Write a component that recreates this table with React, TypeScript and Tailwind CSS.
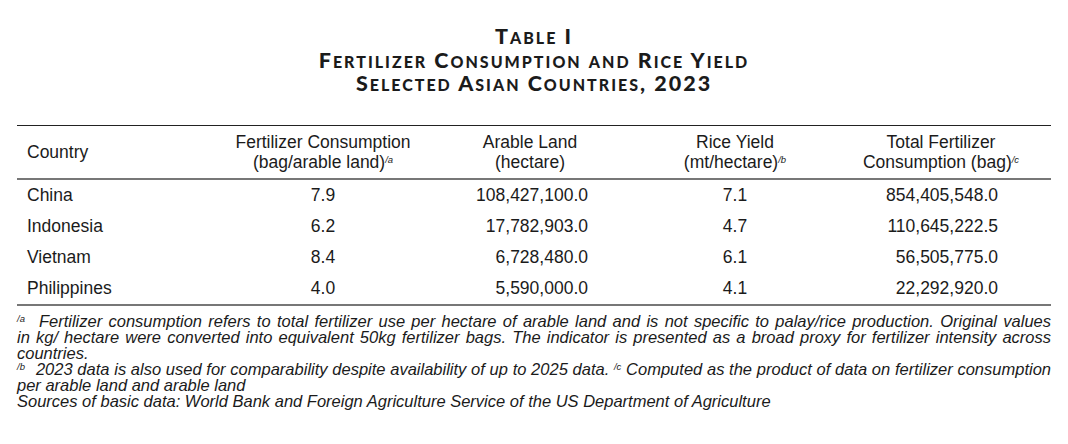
const rows = [
  { country: "China", fert: "7.9", land: "108,427,100.0", rice: "7.1", total: "854,405,548.0" },
  { country: "Indonesia", fert: "6.2", land: "17,782,903.0", rice: "4.7", total: "110,645,222.5" },
  { country: "Vietnam", fert: "8.4", land: "6,728,480.0", rice: "6.1", total: "56,505,775.0" },
  { country: "Philippines", fert: "4.0", land: "5,590,000.0", rice: "4.1", total: "22,292,920.0" },
];

// lowercase runs become smaller capitals, the rest stays full size
function SmallCaps({ text }: { text: string }) {
  return (
    <>
      {text.split(/([a-z]+)/).map((part, i) =>
        /^[a-z]+$/.test(part) ? (
          <span key={i} className="text-[16px] leading-none">
            {part.toUpperCase()}
          </span>
        ) : (
          <span key={i}>{part}</span>
        ),
      )}
    </>
  );
}

function Mark({ label, className = "" }: { label: string; className?: string }) {
  return <sup className={"text-[9.5px] italic " + className}>{label}</sup>;
}

export default function App() {
  return (
    <div className="h-[444px] w-[1068px] bg-white text-[#1b1b1b]">
      <div className="pt-[25px] text-center font-['Lato',sans-serif] text-[21.5px] font-black leading-[23.5px] tracking-[2px]">
        <div>
          <SmallCaps text="Table I" />
        </div>
        <div>
          <SmallCaps text="Fertilizer Consumption and Rice Yield" />
        </div>
        <div>
          <SmallCaps text="Selected Asian Countries, 2023" />
        </div>
      </div>

      <div className="mx-[17px] mt-[29px] font-['Liberation_Sans',Arial,sans-serif]">
        <div className="grid grid-cols-[193px_226px_188px_222px_197px] border-t border-b-2 border-t-[#222] border-b-[#777] py-[6px] text-[17.5px] leading-[20px]">
          <div className="self-center pl-[10px]">Country</div>
          <div className="text-center">
            Fertilizer Consumption
            <br />
            (bag/arable land)<Mark label="/a" />
          </div>
          <div className="text-center">
            Arable Land
            <br />
            (hectare)
          </div>
          <div className="text-center">
            Rice Yield
            <br />
            (mt/hectare)<Mark label="/b" />
          </div>
          <div className="pr-[7px] text-center">
            Total Fertilizer
            <br />
            Consumption (bag)<Mark label="/c" />
          </div>
        </div>

        <div className="border-b-2 border-[#777] text-[17.5px]">
          {rows.map((r) => (
            <div
              key={r.country}
              className="grid h-[31px] grid-cols-[193px_226px_188px_222px_197px] items-center"
            >
              <div className="pl-[10px]">{r.country}</div>
              <div className="text-center">{r.fert}</div>
              <div className="pr-[36px] text-right">{r.land}</div>
              <div className="text-center">{r.rice}</div>
              <div className="pr-[45px] text-right">{r.total}</div>
            </div>
          ))}
        </div>

        <div className="pt-[7px] text-[16.5px] italic leading-[16px]">
          <div className="text-justify [text-align-last:justify]">
            <Mark label="/a" className="mr-[14px]" />
            Fertilizer consumption refers to total fertilizer use per hectare of arable land and is not specific to palay/rice production. Original values
          </div>
          <div className="text-justify [text-align-last:justify]">
            in kg/ hectare were converted into equivalent 50kg fertilizer bags. The indicator is presented as a broad proxy for fertilizer intensity across
          </div>
          <div>countries.</div>
          <div className="text-justify [text-align-last:justify]">
            <Mark label="/b" className="mr-[11px]" />
            2023 data is also used for comparability despite availability of up to 2025 data. <Mark label="/c" /> Computed as the product of data on fertilizer consumption
          </div>
          <div>per arable land and arable land</div>
          <div>Sources of basic data: World Bank and Foreign Agriculture Service of the US Department of Agriculture</div>
        </div>
      </div>
    </div>
  );
}
